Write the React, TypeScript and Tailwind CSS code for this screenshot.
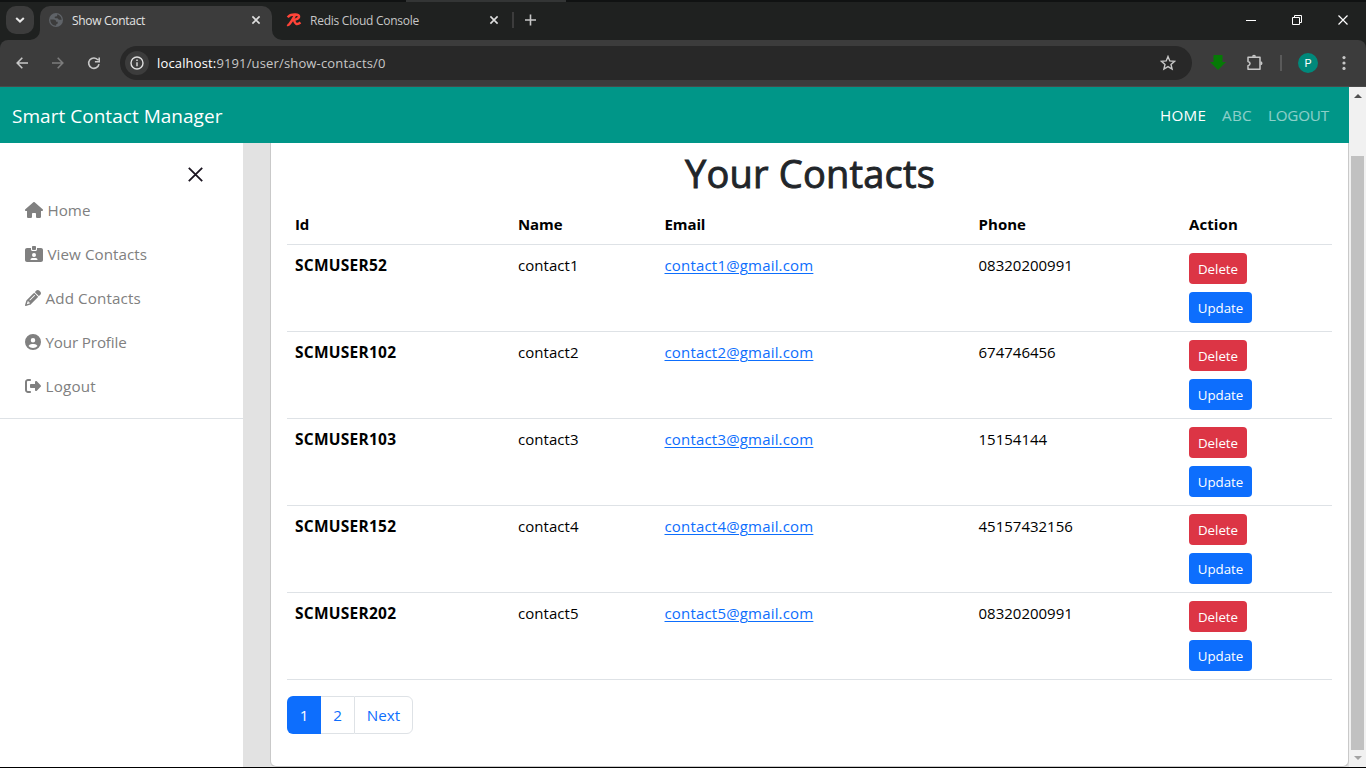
import type { ReactNode } from "react";
import {
  FaHouse,
  FaIdCardClip,
  FaPencil,
  FaCircleUser,
  FaRightFromBracket,
} from "react-icons/fa6";

function TabStrip() {
  return (
    <div className="flex h-[38px] items-start bg-[#1f2120] text-[#e3e3e3]">
      <div className="mt-1 ml-1.5 flex h-7 w-7 items-center justify-center rounded-[10px] bg-[#3c3c3c]">
        <svg width="10" height="6" viewBox="0 0 10 6" fill="none" stroke="#e8e8e8" strokeWidth="2">
          <path d="M1.2 1 5 4.6 8.8 1" />
        </svg>
      </div>
      <div className="relative mt-1 ml-1.5 flex h-[34px] w-[232px] items-start rounded-t-[10px] bg-[#3c3c3c] pt-1.5 pl-2">
        <svg className="absolute bottom-0 -left-2.5" width="10" height="10" viewBox="0 0 10 10">
          <path d="M10 0v10H0A10 10 0 0 0 10 0Z" fill="#3c3c3c" />
        </svg>
        <svg className="absolute -right-2.5 bottom-0" width="10" height="10" viewBox="0 0 10 10">
          <path d="M0 0v10h10A10 10 0 0 1 0 0Z" fill="#3c3c3c" />
        </svg>
        <svg width="16" height="16" viewBox="0 0 16 16">
          <circle cx="8" cy="8" r="7" fill="#5f6368" />
          <path
            d="M2.3 7.6h3.2c1.6 0 2.6.8 2.6 2.2h1.6v1.4c0 .8-1.4.8-1.6 1.6v1C4.700 13.800 2.200 11.200 2.300 7.600ZM9.200 2.300v1.200c0 .9-.9 1-1.900 1.100-.9.2-.8 1.600.3 1.600h1.600c1 0 .9 1.500 2.100 1.500h2.400C13.500 5 11.700 2.800 9.200 2.300Z"
            fill="#3c3c3c"
          />
        </svg>
        <span className="ml-2 w-[179px] text-[12px] leading-[18px] tracking-[-0.3px]">Show Contact</span>
        <CloseMark />
      </div>
      <div className="mt-1 flex h-[34px] w-[240px] items-start pt-1.5 pl-3.5">
        <svg width="16" height="16" viewBox="0 0 16 16" fill="none" stroke="#ff4438">
          <path
            d="M1.800 5.400C3.200 3.200 6.200 2.500 9.500 2.600c4.200.2 4.500 2.600 1.700 4.200C9.600 7.800 7.600 8.200 5.600 8.200M9 3.200C7.400 6 5.800 9 3.700 11.800c-.8 1-1.700 1.400-2.500 1M8.200 8.400c.6 3.600 2.600 4.900 6.300 2.200"
            strokeWidth="2.5"
          />
        </svg>
        <span className="ml-2 w-[179px] text-[12px] leading-[18px] tracking-[-0.25px] text-[#c7c7c7]">
          Redis Cloud Console
        </span>
        <CloseMark />
      </div>
      <div className="mt-[10px] h-4 w-0.5 bg-[#3c3c3c]" />
      <svg className="mt-[12px] ml-[11px]" width="11" height="12" viewBox="0 0 11 12" stroke="#c7c7c7" strokeWidth="1.6">
        <path d="M5.5 .5v11M0 6h11" />
      </svg>
      <div className="ml-auto flex items-center pt-[12px] pr-[17px]">
        <svg width="103" height="12" viewBox="0 0 103 12" fill="none" stroke="#fff">
          <path d="M0 6.5h10" />
          <path d="M46.5 3.5h7v7h-7zM48.5 3.5v-2h7v7h-2" />
          <path d="m92.5 1.5 9 9m0-9-9 9" strokeWidth="1.2" />
        </svg>
      </div>
    </div>
  );
}

function CloseMark() {
  return (
    <svg className="mt-[3px]" width="10" height="10" viewBox="0 0 10 10" stroke="#dedede" strokeWidth="1.6">
      <path d="m1.4 1.4 7.2 7.2m0-7.2L1.4 8.6" />
    </svg>
  );
}

function Toolbar() {
  return (
    <div className="bg-[#1f2120]">
      <div className="flex h-[47px] items-start rounded-t-lg border-b border-[#4a4a4a] bg-[#3c3c3c] pt-1.5">
        <svg className="mt-[11px] ml-4" width="86" height="13" viewBox="0 0 86 13" fill="none" strokeWidth="1.6">
          <path d="M12 6H1.4M6.3 .8 1.2 6l5.1 5.2" stroke="#c7c7c7" />
          <path d="M36 6h10.6M41.7.8 46.8 6l-5.1 5.2" stroke="#7c7c7c" />
          <path d="M82.1 3.1A5.2 5.2 0 1 0 83 7.2M83.2.5v4.3h-4.3" stroke="#c7c7c7" />
        </svg>
        <div className="ml-[18px] flex h-[34px] w-[1072px] items-center rounded-full bg-[#282828] pl-[5px]">
          <div className="flex h-6 w-6 items-center justify-center rounded-full bg-[#3c3c3c]">
            <svg width="14" height="14" viewBox="0 0 14 14" fill="none" stroke="#dedede" strokeWidth="1.4">
              <circle cx="7" cy="7" r="6" />
              <path d="M7 6.2v4M7 3.6V5" />
            </svg>
          </div>
          <span className="ml-2 text-[13px] leading-5 tracking-[0.15px] text-[#c7c7c7]">
            <span className="text-white">localhost:</span>9191/user/show-contacts/0
          </span>
          <svg className="mr-4 ml-auto" width="16" height="16" viewBox="0 0 16 16" fill="none" stroke="#c7c7c7" strokeWidth="1.4">
            <path d="m8 1.5 1.8 4.4 4.8.4-3.6 3.1 1.1 4.7L8 11.6l-4.1 2.5L5 9.4 1.4 6.3l4.8-.4Z" />
          </svg>
        </div>
        <svg className="mt-[8px] ml-[18px]" width="16" height="17" viewBox="0 0 16 17">
          <path d="M3.5 1h9v7H16l-8 8L0 8h3.5Z" fill="#067a06" />
        </svg>
        <svg className="mt-[7px] ml-[19px]" width="19" height="18" viewBox="0 0 19 18">
          <path
            d="M3 4.300h12v12H3v-3.600c2.700-.7 2.700-3.600 0-4.300Z"
            fill="none"
            stroke="#c7c7c7"
            strokeWidth="1.5"
            strokeLinejoin="round"
          />
          <path d="M7 3.800a2 2 0 0 1 4 0ZM15.500 8.300a2 2 0 0 1 0 4Z" fill="#c7c7c7" />
        </svg>
        <div className="mt-[9px] ml-[16px] h-4 w-0.5 bg-[#5a5a5a]" />
        <div className="mt-[7px] ml-4 flex h-5 w-5 items-center justify-center rounded-full bg-[#00897b] font-[Roboto] text-[11px] leading-none text-white">
          P
        </div>
        <svg className="mt-[9px] ml-[24px]" width="4" height="16" viewBox="0 0 4 16" fill="#c7c7c7">
          <circle cx="2" cy="2.6" r="1.6" />
          <circle cx="2" cy="8" r="1.6" />
          <circle cx="2" cy="13.4" r="1.6" />
        </svg>
      </div>
    </div>
  );
}

function SideLink({ icon, children }: { icon: ReactNode; children: ReactNode }) {
  return (
    <a className="flex h-11 items-center gap-[4.5px] pl-[25px] text-[15.2px] text-[#808080]">
      {icon}
      {children}
    </a>
  );
}

function Sidebar() {
  return (
    <aside className="h-full w-[243px] shrink-0 bg-white">
      <div className="flex h-[45px] items-start justify-end pt-6 pr-10">
        <svg width="15" height="15" viewBox="0 0 15 15" fill="none" stroke="#1a1420" strokeWidth="1.8">
          <path d="m.8.8 13.4 13.4m0-13.4L.8 14.2" />
        </svg>
      </div>
      <nav className="border-b border-[#dee2e6] pb-[10px]">
        <SideLink icon={<FaHouse className="h-4 w-[18px]" />}>
          <span>Home</span>
        </SideLink>
        <SideLink icon={<FaIdCardClip className="h-4 w-[18px]" />}>
          <span className="tracking-[0.05px]">View Contacts</span>
        </SideLink>
        <SideLink icon={<FaPencil className="h-4 w-4" />}>
          <span className="tracking-[0.12px]">Add Contacts</span>
        </SideLink>
        <SideLink icon={<FaCircleUser className="h-4 w-4" />}>
          <span className="tracking-[-0.15px]">Your Profile</span>
        </SideLink>
        <SideLink icon={<FaRightFromBracket className="h-4 w-4" />}>
          <span className="tracking-[0.2px]">Logout</span>
        </SideLink>
      </nav>
    </aside>
  );
}

const contacts = [
  ["SCMUSER52", "contact1", "contact1@gmail.com", "08320200991"],
  ["SCMUSER102", "contact2", "contact2@gmail.com", "674746456"],
  ["SCMUSER103", "contact3", "contact3@gmail.com", "15154144"],
  ["SCMUSER152", "contact4", "contact4@gmail.com", "45157432156"],
  ["SCMUSER202", "contact5", "contact5@gmail.com", "08320200991"],
];

function ContactTable() {
  return (
    <div className="text-[15px] leading-6 text-black">
      <div className="grid h-[41px] grid-cols-[223px_146.5px_314px_210.5px_1fr] border-b border-[#dee2e6] font-bold *:p-2">
        <div className="tracking-[-0.1px]">Id</div>
        <div className="tracking-[-0.1px]">Name</div>
        <div className="tracking-[-0.1px]">Email</div>
        <div className="tracking-[0.05px]">Phone</div>
        <div className="tracking-[0.1px]">Action</div>
      </div>
      {contacts.map(([id, name, email, phone]) => (
        <div
          key={id}
          className="grid h-[87px] grid-cols-[223px_146.5px_314px_210.5px_1fr] border-b border-[#dee2e6] *:p-2"
        >
          <div className="text-[15.5px] font-bold tracking-[0.25px]">{id}</div>
          <div className="tracking-[0.05px]">{name}</div>
          <div className="tracking-[0.18px] text-[#0d6efd]">
            <span className="underline decoration-1 underline-offset-2">{email}</span>
          </div>
          <div>{phone}</div>
          <div className="flex flex-col items-start gap-2 text-[13.3px] text-white">
            <button className="h-[31px] w-[58px] rounded bg-[#dc3545] pt-px">Delete</button>
            <button className="h-[31px] w-[63px] rounded bg-[#0d6efd] pt-px">Update</button>
          </div>
        </div>
      ))}
    </div>
  );
}

function Pagination() {
  return (
    <div className="mt-4 flex h-[38px] text-[15.2px] text-[#0d6efd] *:flex *:items-center *:justify-center">
      <span className="w-[34px] rounded-l-md bg-[#0d6efd] text-white">1</span>
      <span className="w-[33px] border-y border-[#dee2e6]">2</span>
      <span className="w-[59px] rounded-r-md border border-[#dee2e6]">Next</span>
    </div>
  );
}

function Scrollbar() {
  return (
    <div className="flex w-[17px] flex-col items-center bg-[#f1f1f1]">
      <svg className="mt-[7px]" width="8" height="4" viewBox="0 0 8 4">
        <path d="M0 4 4 0l4 4Z" fill="#505050" />
      </svg>
      <div className="mt-[58px] h-[594px] w-[13px] bg-[#c1c1c1]" />
      <svg className="mt-1.5" width="8" height="4" viewBox="0 0 8 4">
        <path d="M0 0l4 4 4-4Z" fill="#a3a3a3" />
      </svg>
    </div>
  );
}

export default function App() {
  return (
    <div className="flex h-[768px] w-[1366px] flex-col overflow-hidden bg-black font-['Open_Sans','Noto_Sans',sans-serif]">
      <div className="h-0.5 bg-[#101212]">
        <div className="ml-[406px] h-full w-[160px] bg-[#333535]" />
      </div>
      <TabStrip />
      <Toolbar />
      <div className="flex h-[680px]">
        <div className="flex w-[1349px] flex-col">
          <header className="flex h-14 shrink-0 items-center bg-[#009688] pl-3 text-white">
            <span className="pt-0.5 text-[19px] tracking-[0.03px]">Smart Contact Manager</span>
            <nav className="ml-auto flex pr-5 text-[15.2px] *:flex-none">
              <span className="w-[62px] tracking-[0.3px]">HOME</span>
              <span className="w-[46px] tracking-[0.3px] text-white/55">ABC</span>
              <span className="w-[61px] tracking-[-0.2px] text-white/55">LOGOUT</span>
            </nav>
          </header>
          <div className="flex h-[624px] bg-[#e2e2e2]">
            <Sidebar />
            <main className="ml-[27px] w-[1079px] rounded-b-md border-x border-b border-[#c9c9c9] bg-white px-4 pt-[5px]">
              <h1 className="mb-2 h-12 pl-px text-center text-[38px] leading-[51px] font-normal tracking-[0.2px] text-[#212529] [-webkit-text-stroke:0.9px_#212529]">
                Your Contacts
              </h1>
              <ContactTable />
              <Pagination />
            </main>
          </div>
        </div>
        <Scrollbar />
      </div>
    </div>
  );
}
